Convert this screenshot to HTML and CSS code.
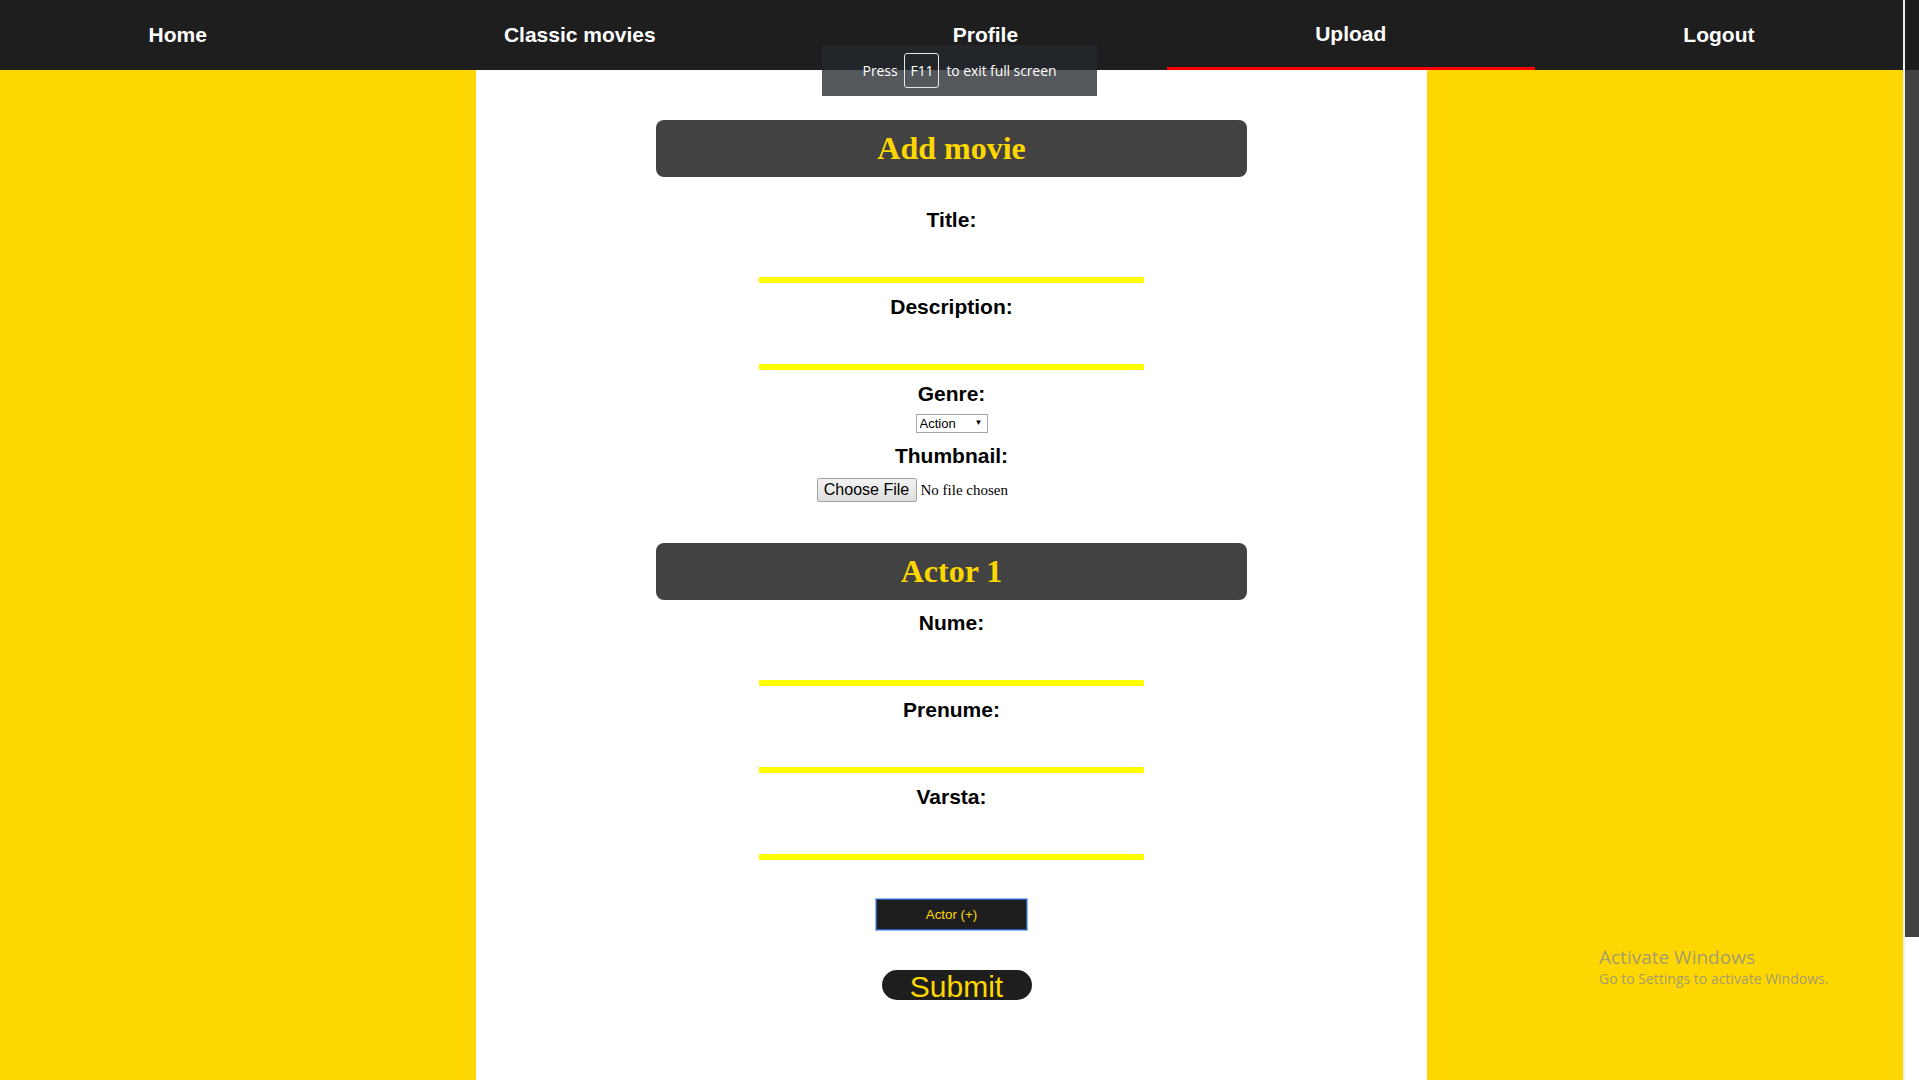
FILE: index.html
```html
<!DOCTYPE html>
<html lang="en">
<head>
<meta charset="utf-8">
<title>Upload</title>
<link rel="stylesheet" href="styles.css">
</head>
<body>
<div class="page">
  <nav class="nav">
    <a class="nav-item" href="#">Home</a>
    <a class="nav-item" href="#">Classic movies</a>
    <a class="nav-item" href="#">Profile</a>
    <a class="nav-item active" href="#">Upload</a>
    <a class="nav-item" href="#">Logout</a>
  </nav>
  <main class="main">
    <form class="column">
      <h1 class="section-head first">Add movie</h1>
      <label class="field-label">Title:</label>
      <input class="line-input" type="text">
      <label class="field-label">Description:</label>
      <input class="line-input" type="text">
      <label class="field-label">Genre:</label>
      <span class="select-wrap">
        <select class="genre-select">
          <option>Action</option>
          <option>Comedy</option>
          <option>Drama</option>
        </select>
      </span>
      <label class="field-label thumb-label">Thumbnail:</label>
      <div class="file-row">
        <button type="button" class="file-btn">Choose File</button><span class="file-text">No file chosen</span>
      </div>
      <h1 class="section-head actor">Actor 1</h1>
      <label class="field-label first-actor">Nume:</label>
      <input class="line-input" type="text">
      <label class="field-label">Prenume:</label>
      <input class="line-input" type="text">
      <label class="field-label">Varsta:</label>
      <input class="line-input last" type="text">
      <button type="button" class="add-actor">Actor (+)</button>
      <div class="submit-row">
        <button type="submit" class="submit-btn">Submit</button>
      </div>
    </form>
  </main>
</div>
<div class="scrollbar"></div>

<div class="fs-toast">
  <span>Press</span><span class="key">F11</span><span>to exit full screen</span>
</div>

<div class="watermark">
  <div class="wm-title">Activate Windows</div>
  <div class="wm-sub">Go to Settings to activate Windows.</div>
</div>
</body>
</html>
```

FILE: styles.css
```css
html, body {
  margin: 0;
  padding: 0;
  height: 100%;
}

body {
  display: flex;
  overflow: hidden;
  font-family: "Liberation Sans", Arial, sans-serif;
  background: #ffffff;
}

.page {
  flex: 1 1 auto;
  display: flex;
  flex-direction: column;
  min-width: 0;
}

.nav {
  height: 70px;
  display: flex;
  background: #1e1e1e;
  flex: 0 0 auto;
}

.nav-item {
  flex: 1 1 auto;
  box-sizing: border-box;
  height: 70px;
  line-height: 70px;
  text-align: center;
  color: #ffffff;
  font-weight: bold;
  font-size: 21px;
  text-decoration: none;
  white-space: nowrap;
}

.nav-item.active {
  border-bottom: 3px solid #ff0000;
  line-height: 67px;
}

.main {
  flex: 1 1 auto;
  background: #ffd700;
}

.column {
  width: 50%;
  height: 100%;
  margin: 0 auto;
  background: #ffffff;
  box-sizing: border-box;
  padding-top: 50px;
  text-align: center;
}

.section-head {
  width: 591px;
  height: 57px;
  margin: 0 auto;
  background: #424242;
  border-radius: 8px;
  color: #ffd700;
  font-family: "Liberation Serif", "Times New Roman", serif;
  font-weight: bold;
  font-size: 32px;
  line-height: 57px;
}

.section-head.first {
  margin-bottom: 30px;
}

.section-head.actor {
  margin-top: 41px;
  margin-bottom: 10px;
}

.field-label {
  display: block;
  font-weight: bold;
  font-size: 21px;
  line-height: 25px;
  color: #000000;
}

.line-input {
  display: block;
  width: 385px;
  height: 51px;
  box-sizing: border-box;
  margin: 0 auto 11px;
  border: none;
  border-bottom: 6px solid #ffff00;
  background: transparent;
  outline: none;
}

.line-input.last {
  margin-bottom: 39px;
}

.select-wrap {
  position: relative;
  display: inline-block;
  margin-top: 8px;
  vertical-align: top;
}

.genre-select {
  -webkit-appearance: none;
  appearance: none;
  display: block;
  width: 72px;
  height: 19px;
  box-sizing: border-box;
  border: 1px solid #a6a6a6;
  border-radius: 0;
  background: #ffffff;
  font-family: "Liberation Sans", Arial, sans-serif;
  font-size: 13px;
  line-height: 17px;
  padding: 0 0 0 3px;
  color: #000000;
}

.select-wrap::after {
  content: "\25BC";
  position: absolute;
  right: 5px;
  top: 5px;
  font-size: 8px;
  line-height: 8px;
  color: #000000;
  pointer-events: none;
}

.thumb-label {
  margin-top: 10px;
}

.file-row {
  width: 270px;
  margin: 10px auto 0;
  display: flex;
  align-items: center;
  text-align: left;
}

.file-btn {
  height: 24px;
  width: 100px;
  box-sizing: border-box;
  padding: 0;
  border: 1px solid #a3a3a3;
  border-radius: 2px;
  background: linear-gradient(#f2f2f2, #dedede);
  font-family: "Liberation Sans", Arial, sans-serif;
  font-size: 16px;
  color: #000000;
}

.file-text {
  margin-left: 4px;
  font-family: "Liberation Serif", "Times New Roman", serif;
  font-size: 15px;
  color: #000000;
}

.add-actor {
  display: block;
  width: 151px;
  height: 31px;
  margin: 0 auto;
  box-sizing: border-box;
  background: #1e1e1e;
  border: 1px solid #2a5db0;
  outline: 1px solid #93b8f0;
  outline-offset: 0;
  color: #ffd700;
  font-family: "Liberation Sans", Arial, sans-serif;
  font-size: 13.333px;
  padding: 0;
}

.submit-row {
  margin-top: 40px;
  padding-left: 10px;
}

.submit-btn {
  display: block;
  width: 150px;
  height: 30px;
  margin: 0 auto;
  box-sizing: border-box;
  padding: 2px 0 0;
  border: none;
  border-radius: 15px;
  background: #1e1e1e;
  color: #ffd700;
  font-family: "Liberation Sans", Arial, sans-serif;
  font-size: 30px;
  line-height: 30px;
  overflow: visible;
}

.scrollbar {
  flex: 0 0 16px;
  box-sizing: border-box;
  border-left: 2px solid #eef0ee;
  background: linear-gradient(to bottom, #1c1c1c 0, #1c1c1c 70px, #424242 70px, #424242 937px, #ffffff 937px);
}

.fs-toast {
  position: absolute;
  left: 822px;
  top: 45px;
  width: 275px;
  height: 51px;
  display: flex;
  align-items: center;
  justify-content: center;
  gap: 7px;
  background: rgba(36, 40, 45, 0.78);
  color: #ffffff;
  font-family: "Open Sans", "Noto Sans", sans-serif;
  font-size: 14px;
  letter-spacing: -0.1px;
}

.fs-toast .key {
  width: 33px;
  height: 33px;
  border: 1px solid #e6e6e6;
  border-radius: 3px;
  display: flex;
  align-items: center;
  justify-content: center;
}

.watermark {
  position: absolute;
  left: 1599px;
  top: 945px;
  color: rgba(140, 140, 140, 0.8);
  font-family: "Open Sans", "Noto Sans", sans-serif;
}

.wm-title {
  font-size: 19px;
  line-height: 25px;
}

.wm-sub {
  font-size: 14px;
  line-height: 18px;
}
```
